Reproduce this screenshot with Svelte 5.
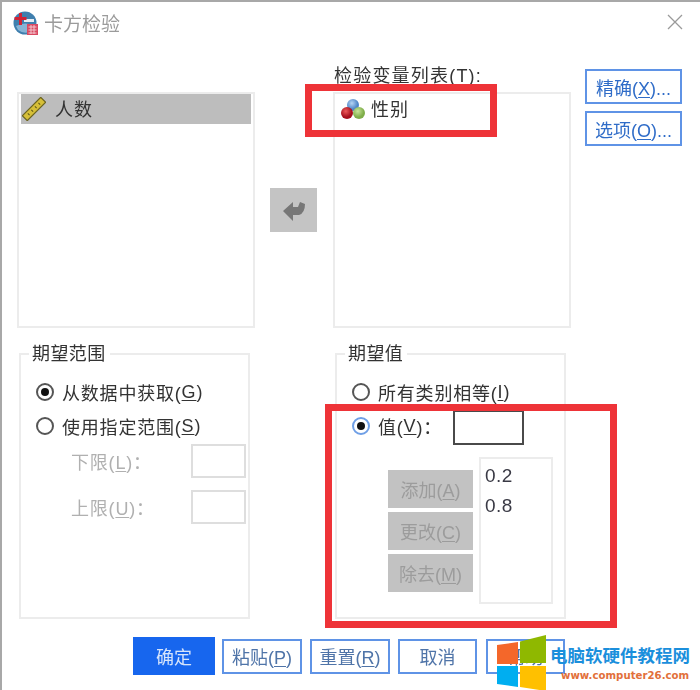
<script>
  const rangeLimits = [
    { label: "下限", key: "L" },
    { label: "上限", key: "U" },
  ];
  const valueActions = [
    { label: "添加", key: "A" },
    { label: "更改", key: "C" },
    { label: "除去", key: "M" },
  ];
  const values = ["0.2", "0.8"];
  const footerButtons = [
    { label: "粘贴", key: "P" },
    { label: "重置", key: "R" },
    { label: "取消", wide: true },
    { label: "帮助", wide: true },
  ];
</script>

<div class="dialog">
  <div class="content">
    <header class="titlebar">
      <svg class="app-icon" width="26" height="26" viewBox="0 0 26 26">
        <circle cx="12" cy="13" r="11.5" fill="#3f7fae" />
        <path d="M3 16 q9 -5 19 0 v3 q-9 7 -17 1z" fill="#86b4d6" />
        <path d="M11 9h10v3h-10z" fill="#e6eef5" />
        <path d="M6 3h3v4h4.500v3h-4.500v5h-3v-5h-4.500v-3h4.500z" fill="#cf2336" />
        <rect x="14" y="14" width="11" height="11" fill="#d94a62" />
        <path d="M15.500 17h8M15.500 20h8M15.500 23h8M18 15v9M21 15v9" stroke="#f3c4cc" stroke-width="1" />
      </svg>
      <span class="title">卡方检验</span>
      <svg class="close" width="16" height="16" viewBox="0 0 16 16">
        <path d="M1 1l14 14M15 1l-14 14" stroke="#9a9a9a" stroke-width="1.300" fill="none" />
      </svg>
    </header>

    <section class="top">
      <div class="list source">
        <div class="item selected">
          <svg width="24" height="24" viewBox="0 0 24 24">
            <g transform="rotate(-45 12 12)">
              <rect x="-1" y="8.500" width="26" height="7" fill="#d6bf38" stroke="#6b6420" stroke-width="1.200" />
              <path d="M4 12h1M9 12h1M14 12h1M19 12h1" stroke="#5d5618" stroke-width="2.500" />
            </g>
          </svg>
          <span>人数</span>
        </div>
      </div>

      <button class="arrow" aria-label="移动">
        <svg width="24" height="24" viewBox="0 0 24 24">
          <path d="M1 13l10 -9v5h5l2 -5 5 2q0 9 -6 11h-6v6z" fill="#777" />
        </svg>
      </button>

      <div class="target">
        <div class="target-label">检验变量列表(<u>T</u>):</div>
        <div class="list">
          <div class="item">
            <svg width="26" height="24" viewBox="0 0 26 24">
              <defs>
                <radialGradient id="ball-blue" cx="40%" cy="35%"><stop offset="0" stop-color="#b5d4f4" /><stop offset="1" stop-color="#4f86c8" /></radialGradient>
                <radialGradient id="ball-red" cx="40%" cy="35%"><stop offset="0" stop-color="#ee5a5a" /><stop offset="1" stop-color="#a50f1c" /></radialGradient>
                <radialGradient id="ball-green" cx="40%" cy="35%"><stop offset="0" stop-color="#c9e59a" /><stop offset="1" stop-color="#7fae4a" /></radialGradient>
              </defs>
              <circle cx="13" cy="8" r="6" fill="url(#ball-blue)" />
              <circle cx="19" cy="16" r="6" fill="url(#ball-green)" />
              <circle cx="7" cy="16" r="6" fill="url(#ball-red)" />
            </svg>
            <span>性别</span>
          </div>
        </div>
      </div>

      <div class="side">
        <button class="btn">精确(<u>X</u>)...</button>
        <button class="btn">选项(<u>O</u>)...</button>
      </div>
    </section>

    <section class="groups">
      <fieldset>
        <legend>期望范围</legend>
        <div class="radio-row"><span class="radio on"></span>从数据中获取(<u>G</u>)</div>
        <div class="radio-row"><span class="radio"></span>使用指定范围(<u>S</u>)</div>
        <div class="limits">
          {#each rangeLimits as limit}
            <div class="limit">
              <span class="limit-label">{limit.label}(<u>{limit.key}</u>)：</span>
              <span class="input"></span>
            </div>
          {/each}
        </div>
      </fieldset>

      <fieldset>
        <legend>期望值</legend>
        <div class="radio-row"><span class="radio"></span>所有类别相等(<u>I</u>)</div>
        <div class="radio-row">
          <span class="radio on focus"></span>值(<u>V</u>)：
          <span class="input active"></span>
        </div>
        <div class="value-editor">
          <div class="actions">
            {#each valueActions as action}
              <button class="action">{action.label}(<u>{action.key}</u>)</button>
            {/each}
          </div>
          <div class="value-list">
            {#each values as value}
              <div>{value}</div>
            {/each}
          </div>
        </div>
      </fieldset>
    </section>

    <footer class="footer">
      <button class="btn primary">确定</button>
      {#each footerButtons as b}
        <button class="btn" class:wide={b.wide}>
          {b.label}{#if b.key}(<u>{b.key}</u>){/if}
        </button>
      {/each}
    </footer>
  </div>

  <div class="mark mark-test"></div>
  <div class="mark mark-values"></div>

  <div class="watermark">
    <svg width="50" height="56" viewBox="0 0 50 56">
      <path d="M0 10l21 -3v22h-21z" fill="#f4672a" />
      <path d="M23 6.500l26 -6.500v28h-26z" fill="#8fb800" />
      <path d="M0 31h21v21l-21 -3z" fill="#00aef0" />
      <path d="M23 31h26v25l-26 -4z" fill="#ffc000" />
    </svg>
    <div class="site">电脑软硬件教程网</div>
    <div class="url">www.computer26.com</div>
  </div>
</div>

<style>
  :global(body) {
    margin: 0;
    background: #fff;
  }
  .dialog {
    position: relative;
    width: 700px;
    height: 690px;
    box-sizing: border-box;
    overflow: hidden;
    background: #fff;
    border-top: 2px solid #a8a8a8;
    border-left: 2px solid #a8a8a8;
    font-family: "Liberation Sans", "Noto Sans CJK SC", sans-serif;
    font-size: 18px;
    color: #333;
  }
  .content {
    filter: blur(0.6px);
  }
  u {
    text-underline-offset: 2px;
  }
  button {
    font: inherit;
    padding: 0;
    margin: 0;
    box-sizing: border-box;
  }

  .titlebar {
    height: 42px;
    display: flex;
    align-items: center;
    padding-left: 11px;
    box-sizing: border-box;
  }
  .app-icon {
    margin-top: -1px;
  }
  .title {
    margin-left: 5px;
    margin-top: -2px;
    font-size: 19px;
    color: #9b9b9b;
  }
  .close {
    margin-left: auto;
    margin-right: 17px;
    margin-top: -2px;
  }

  .top {
    display: grid;
    grid-template-columns: 238px 47px 238px 97px;
    column-gap: 15px;
    height: 284px;
    padding-left: 15px;
  }
  .list {
    box-sizing: border-box;
    height: 236px;
    border: 2px solid #ececec;
    padding: 0 2px;
  }
  .source {
    margin-top: 48px;
  }
  .item {
    display: flex;
    align-items: center;
    gap: 9px;
    height: 30px;
    padding-left: 3px;
    letter-spacing: 1px;
  }
  .item span {
    margin-top: -3px;
  }
  .selected {
    background: #bdbdbd;
    padding-left: 1px;
  }
  .arrow {
    align-self: center;
    justify-self: start;
    margin-top: 48px;
    width: 47px;
    height: 44px;
    border: none;
    background: #c4c4c4;
    display: flex;
    align-items: center;
    justify-content: center;
  }
  .target {
    margin-left: 1px;
    width: 238px;
  }
  .target-label {
    height: 48px;
    box-sizing: border-box;
    padding: 17px 0 0 1px;
    letter-spacing: 1.200px;
    white-space: nowrap;
  }
  .target .item {
    padding-left: 3px;
    gap: 5px;
  }
  .side {
    display: flex;
    flex-direction: column;
    gap: 7px;
    padding-top: 25px;
  }

  .btn {
    height: 35px;
    width: 97px;
    border: 2px solid #5f93e6;
    background: #fff;
    color: #4477bb;
    white-space: nowrap;
  }
  .side .btn {
    color: #2f6cc8;
  }
  .footer {
    display: flex;
    align-items: center;
    gap: 8px;
    margin-top: 18px;
    padding-left: 131px;
  }
  .footer .btn {
    width: 80px;
    color: #4f74a8;
  }
  .footer .btn.wide {
    width: 79px;
  }
  .footer .btn:last-child {
    margin-left: 1px;
  }
  .footer .primary {
    width: 82px;
    height: 38px;
    margin-right: -1px;
    border-color: #1766ee;
    background: #1766ee;
    color: #d6e4fb;
  }

  .groups {
    display: grid;
    grid-template-columns: 231px 231px;
    column-gap: 85px;
    padding-left: 17px;
    margin-top: 16px;
  }
  fieldset {
    margin: 0;
    height: 275px;
    box-sizing: border-box;
    border: 2px solid #ececec;
    padding: 11px 0 0 15px;
    min-width: 0;
  }
  legend {
    margin-left: -7px;
    padding: 0 4px 0 3px;
    height: 20px;
    line-height: 20px;
    letter-spacing: 0.4px;
  }
  .radio-row {
    display: flex;
    align-items: center;
    height: 34px;
    letter-spacing: 0.8px;
    white-space: nowrap;
  }
  .radio {
    box-sizing: border-box;
    width: 18px;
    height: 18px;
    margin-right: 8px;
    border: 2px solid #555;
    border-radius: 50%;
    display: inline-flex;
    align-items: center;
    justify-content: center;
    flex: none;
  }
  .radio.on::after {
    content: "";
    width: 8px;
    height: 8px;
    border-radius: 50%;
    background: #111;
  }
  .radio.focus {
    border-color: #6f9fe6;
  }

  .limits {
    display: flex;
    flex-direction: column;
    gap: 12px;
    margin-top: 1px;
  }
  .limit {
    display: flex;
    align-items: center;
    padding-left: 35px;
  }
  .limit-label {
    width: 120px;
    color: #b0b0b0;
    letter-spacing: 0.8px;
    white-space: nowrap;
  }
  .input {
    display: block;
    box-sizing: border-box;
    width: 55px;
    height: 34px;
    border: 2px solid #dedede;
  }
  .input.active {
    width: 71px;
    height: 35px;
    margin-left: 11px;
    margin-top: 3px;
    border-color: #4a4a4a;
  }

  .value-editor {
    display: flex;
    gap: 6px;
    margin-top: 14px;
    padding-left: 36px;
  }
  .actions {
    display: flex;
    flex-direction: column;
    gap: 4px;
    padding-top: 13px;
  }
  .action {
    width: 85px;
    height: 38px;
    border: none;
    background: #c2c2c2;
    color: #9c9c9c;
    white-space: nowrap;
  }
  .value-list {
    box-sizing: border-box;
    width: 74px;
    height: 147px;
    border: 2px solid #ececec;
    padding: 2px 0 0 4px;
    font-size: 19px;
    line-height: 30px;
    letter-spacing: 0.5px;
    color: #3a3a45;
  }

  .mark {
    position: absolute;
    box-sizing: border-box;
    border: 7px solid #ee3338;
  }
  .mark-test {
    left: 303px;
    top: 82px;
    width: 192px;
    height: 53px;
  }
  .mark-values {
    left: 323px;
    top: 402px;
    width: 292px;
    height: 224px;
  }

  .watermark {
    position: absolute;
    left: 495px;
    top: 633px;
    width: 203px;
    height: 55px;
  }
  .watermark svg {
    display: block;
  }
  .site {
    position: absolute;
    left: 53px;
    top: 7px;
    font-size: 17.500px;
    font-weight: 700;
    color: #1b8fdc;
    white-space: nowrap;
  }
  .url {
    position: absolute;
    left: 64px;
    top: 35px;
    font-family: "DejaVu Sans", sans-serif;
    font-size: 10.200px;
    font-weight: 700;
    color: #e2703a;
    white-space: nowrap;
  }
</style>
